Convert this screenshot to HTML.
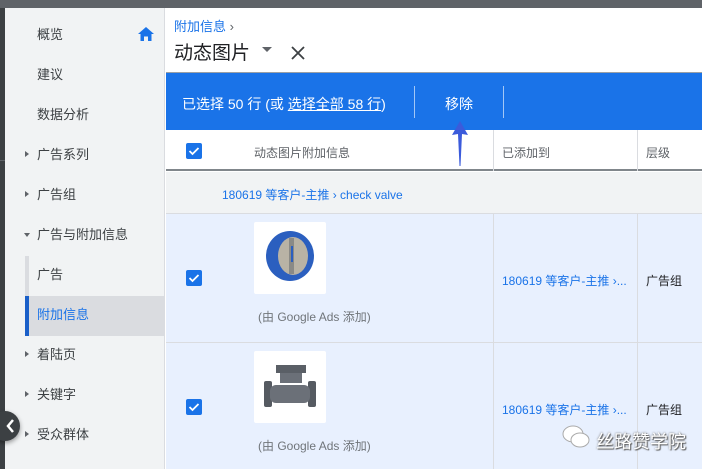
<!DOCTYPE html>
<html><head><meta charset="utf-8"><style>
*{margin:0;padding:0;box-sizing:border-box}
body{width:702px;height:469px;overflow:hidden;position:relative;background:#fff;font-family:"Liberation Sans","Noto Sans CJK SC",sans-serif;}
.abs{position:absolute}
.top{left:0;top:0;width:702px;height:8px;background:#5f6368}
.lstrip{left:0;top:8px;width:5px;height:461px;background:#3c4043}
.side{left:5px;top:8px;width:160px;height:461px;background:#f1f3f4;border-right:1px solid #dadce0}
.item{position:absolute;left:32px;font-size:13px;color:#3c4043;line-height:16px}
.tri{position:absolute;left:20px;width:0;height:0;border-top:3.5px solid transparent;border-bottom:3.5px solid transparent;border-left:4px solid #5f6368}
.cb{position:absolute;width:16px;height:16px;background:#1a73e8;border-radius:2px}
.cb svg{position:absolute;left:2px;top:2px}
.blue{left:166px;top:73px;width:536px;height:57px;background:#1a73e8;color:#fff;font-size:14px}
.link{color:#1a73e8;font-size:12px}
.row{left:166px;width:536px;background:#e8f0fe;border-bottom:1px solid #dadce0}
.vl{position:absolute;width:1px;background:#dadce0}
.imgbox{position:absolute;left:88px;width:72px;height:72px;background:#fff;border-radius:2px}
.cap{position:absolute;left:92px;font-size:12px;color:#70757a}
</style></head><body>
<div class="abs top"></div>
<div class="abs lstrip"></div>
<div class="abs" style="left:0;top:160px;width:5px;height:1px;background:#5f6368"></div>
<div class="abs side">
  <div class="item" style="top:19px">概览</div>
  <svg style="position:absolute;left:133px;top:19px" width="16" height="14" viewBox="0 0 16 14"><path d="M8 0 L16 7 L13.5 7 L13.5 14 L10 14 L10 9.5 L6 9.5 L6 14 L2.5 14 L2.5 7 L0 7 Z" fill="#1a73e8"/></svg>
  <div class="item" style="top:59px">建议</div>
  <div class="item" style="top:99px">数据分析</div>
  <div class="tri" style="top:143px"></div><div class="item" style="top:139px">广告系列</div>
  <div class="tri" style="top:183px"></div><div class="item" style="top:179px">广告组</div>
  <div style="position:absolute;left:19px;top:225px;width:0;height:0;border-left:3.5px solid transparent;border-right:3.5px solid transparent;border-top:4px solid #5f6368"></div>
  <div class="item" style="top:219px">广告与附加信息</div>
  <div style="position:absolute;left:20px;top:248px;width:4px;height:40px;background:#dadce0"></div>
  <div class="item" style="top:259px">广告</div>
  <div style="position:absolute;left:20px;top:288px;width:140px;height:40px;background:#dadce0"></div>
  <div style="position:absolute;left:20px;top:288px;width:4px;height:40px;background:#1a5fc8"></div>
  <div class="item" style="top:299px;color:#1a73e8">附加信息</div>
  <div class="tri" style="top:343px"></div><div class="item" style="top:339px">着陆页</div>
  <div class="tri" style="top:383px"></div><div class="item" style="top:379px">关键字</div>
  <div class="tri" style="top:423px"></div><div class="item" style="top:419px">受众群体</div>
</div>
<div class="abs" style="left:-10px;top:411px;width:30px;height:30px;border-radius:50%;background:#3c4043;box-shadow:0 2px 5px rgba(0,0,0,.4)"></div>
<svg class="abs" style="left:5px;top:419px" width="10" height="14" viewBox="0 0 10 14"><path d="M8 1 L3 7 L8 13" stroke="#fff" stroke-width="2.5" fill="none"/></svg>

<div class="abs" style="left:174px;top:16px;font-size:13px;color:#1a73e8">附加信息 <span style="color:#5f6368">›</span></div>
<div class="abs" style="left:174px;top:38px;font-size:19px;color:#202124">动态图片</div>
<div class="abs" style="left:262px;top:47px;width:0;height:0;border-left:5px solid transparent;border-right:5px solid transparent;border-top:5px solid #5f6368"></div>
<svg class="abs" style="left:291px;top:46px" width="14" height="14" viewBox="0 0 14 14"><path d="M1 1 L13 13 M13 1 L1 13" stroke="#3c4043" stroke-width="1.8"/></svg>
<div class="abs" style="left:166px;top:72px;width:536px;height:1px;background:#9aa0a6"></div>

<div class="abs blue">
  <div style="position:absolute;left:16px;top:21px">已选择 50 行 (或 <span style="text-decoration:underline">选择全部 58 行</span>)</div>
  <div style="position:absolute;left:248px;top:13px;width:1px;height:32px;background:rgba(255,255,255,.6)"></div>
  <div style="position:absolute;left:279px;top:21px">移除</div>
  <div style="position:absolute;left:337px;top:13px;width:1px;height:32px;background:rgba(255,255,255,.6)"></div>
</div>

<div class="abs" style="left:166px;top:130px;width:536px;height:41px;background:#fff;border-bottom:2px solid #80868b">
  <div class="cb" style="left:20px;top:13px"><svg width="12" height="12" viewBox="0 0 12 12"><path d="M1.5 6 L4.5 9 L10.5 3" stroke="#fff" stroke-width="1.8" fill="none"/></svg></div>
  <div style="position:absolute;left:88px;top:14px;font-size:12px;color:#5f6368">动态图片附加信息</div>
  <div class="vl" style="left:327px;top:0;height:41px"></div>
  <div style="position:absolute;left:336px;top:14px;font-size:12px;color:#5f6368">已添加到</div>
  <div class="vl" style="left:471px;top:0;height:41px"></div>
  <div style="position:absolute;left:480px;top:14px;font-size:12px;color:#5f6368">层级</div>
</div>
<svg class="abs" style="left:451px;top:121px;z-index:5" width="18" height="46" viewBox="0 0 18 46"><path d="M9 0 L17 14 L11 13 L9.5 45 L8.5 45 L7 13 L1 14 Z" fill="#3b5bdb"/></svg>
<div class="abs" style="left:166px;top:172px;width:536px;height:42px;background:#f1f3f4;border-bottom:1px solid #dadce0">
  <div class="link" style="position:absolute;left:56px;top:14px">180619 等客户-主推 › check valve</div>
</div>

<div class="abs row" style="top:214px;height:129px">
  <div class="cb" style="left:20px;top:56px"><svg width="12" height="12" viewBox="0 0 12 12"><path d="M1.5 6 L4.5 9 L10.5 3" stroke="#fff" stroke-width="1.8" fill="none"/></svg></div>
  <div class="imgbox" style="top:8px"><svg width="72" height="72" viewBox="0 0 72 72"><ellipse cx="36" cy="34" rx="24" ry="25" fill="#2b5fbf"/><ellipse cx="39" cy="34" rx="15" ry="19" fill="#b9b3a5"/><rect x="35" y="16" width="5" height="36" fill="#8a8a86"/><rect x="37" y="24" width="2" height="16" fill="#2b5fbf"/></svg></div>
  <div class="cap" style="top:94px">(由 Google Ads 添加)</div>
  <div class="vl" style="left:327px;top:0;height:129px"></div>
  <div class="link" style="position:absolute;left:336px;top:58px">180619 等客户-主推 ›...</div>
  <div class="vl" style="left:471px;top:0;height:129px"></div>
  <div style="position:absolute;left:480px;top:58px;font-size:12px;color:#202124">广告组</div>
</div>
<div class="abs row" style="top:343px;height:126px;border-bottom:none">
  <div class="cb" style="left:20px;top:56px"><svg width="12" height="12" viewBox="0 0 12 12"><path d="M1.5 6 L4.5 9 L10.5 3" stroke="#fff" stroke-width="1.8" fill="none"/></svg></div>
  <div class="imgbox" style="top:8px"><svg width="72" height="72" viewBox="0 0 72 72"><rect x="22" y="14" width="30" height="8" fill="#5a5f66"/><rect x="26" y="22" width="22" height="10" fill="#6b7078"/><rect x="10" y="30" width="8" height="26" rx="2" fill="#555a61"/><rect x="54" y="30" width="8" height="26" rx="2" fill="#555a61"/><rect x="16" y="34" width="40" height="18" rx="6" fill="#6b7078"/></svg></div>
  <div class="cap" style="top:94px">(由 Google Ads 添加)</div>
  <div class="vl" style="left:327px;top:0;height:126px"></div>
  <div class="link" style="position:absolute;left:336px;top:58px">180619 等客户-主推 ›...</div>
  <div class="vl" style="left:471px;top:0;height:126px"></div>
  <div style="position:absolute;left:480px;top:58px;font-size:12px;color:#202124">广告组</div>
</div>
<svg class="abs" style="left:562px;top:425px" width="28" height="24" viewBox="0 0 28 24"><ellipse cx="11" cy="9" rx="10" ry="8" fill="#fff" stroke="#aaa"/><ellipse cx="18" cy="15" rx="9" ry="7" fill="#fff" stroke="#aaa"/></svg>
<div class="abs" style="left:596px;top:428px;font-size:18px;color:#fff;text-shadow:0 0 2px #666,1px 1px 1px #555">丝路赞学院</div>
</body></html>
